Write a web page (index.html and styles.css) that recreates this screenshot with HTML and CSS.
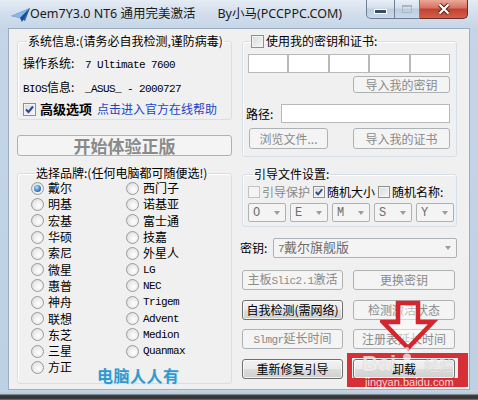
FILE: index.html
```html
<!DOCTYPE html>
<html lang="zh-CN">
<head>
  <meta charset="UTF-8">
  <title>Oem7Y3.0 NT6 通用完美激活</title>
  <link rel="stylesheet" href="styles.css">
</head>
<body>
<div class="window">
  <div class="titlebar">
    <svg class="app-icon" viewBox="0 0 19 14">
      <polygon points="0,8 19,0 14,13 9,10" fill="#2a66b8"/>
      <polygon points="0,8 19,0 9,10" fill="#86b6ea"/>
      <polygon points="9,10 19,0 11,14" fill="#1d4e94"/>
    </svg>
    <div class="title">Oem7Y3.0 NT6 通用完美激活<span class="by">By小马(PCCPPC.COM)</span></div>
    <div class="caption">
      <div class="cap cap-min"><span class="glyph-min"></span></div>
      <div class="cap cap-max"><span class="glyph-max"></span></div>
      <div class="cap cap-close">
        <svg class="glyph-close" viewBox="0 0 16 12">
          <path d="M3.5 1.5 L12.5 10.5 M12.5 1.5 L3.5 10.5" stroke="#5b1e17" stroke-width="4.2" fill="none"/>
          <path d="M3.5 1.5 L12.5 10.5 M12.5 1.5 L3.5 10.5" stroke="#fff" stroke-width="2.2" fill="none"/>
        </svg>
      </div>
    </div>
  </div>

  <div class="client">
    <!-- 左侧 -->
    <div class="col">
      <fieldset class="group sys">
        <legend>系统信息:(请务必自我检测,谨防病毒)</legend>
        <div class="info-row"><span class="k">操作系统:</span><span class="mono">7 Ultimate 7600</span></div>
        <div class="info-row"><span class="k"><span class="mono">BIOS</span>信息:</span><span class="mono">_ASUS_ - 2000727</span></div>
        <div class="check-row">
          <span class="cb"><svg viewBox="0 0 11 11"><path d="M2 5.5 L4.5 8 L9 2.5" fill="none" stroke="#2c4785" stroke-width="2"/></svg></span>
          <b>高级选项</b>
          <a class="link" href="#">点击进入官方在线帮助</a>
        </div>
      </fieldset>

      <button class="btn big" disabled>开始体验正版</button>

      <fieldset class="group brands">
        <legend>选择品牌:(任何电脑都可随便选!)</legend>
        <div class="radio-grid">
          <label class="radio"><span class="rd on"></span>戴尔</label>
          <label class="radio"><span class="rd"></span>明基</label>
          <label class="radio"><span class="rd"></span>宏基</label>
          <label class="radio"><span class="rd"></span>华硕</label>
          <label class="radio"><span class="rd"></span>索尼</label>
          <label class="radio"><span class="rd"></span>微星</label>
          <label class="radio"><span class="rd"></span>惠普</label>
          <label class="radio"><span class="rd"></span>神舟</label>
          <label class="radio"><span class="rd"></span>联想</label>
          <label class="radio"><span class="rd"></span>东芝</label>
          <label class="radio"><span class="rd"></span>三星</label>
          <label class="radio"><span class="rd"></span>方正</label>
          <label class="radio"><span class="rd"></span>西门子</label>
          <label class="radio"><span class="rd"></span>诺基亚</label>
          <label class="radio"><span class="rd"></span>富士通</label>
          <label class="radio"><span class="rd"></span>技嘉</label>
          <label class="radio"><span class="rd"></span>外星人</label>
          <label class="radio"><span class="rd"></span><span class="mono">LG</span></label>
          <label class="radio"><span class="rd"></span><span class="mono">NEC</span></label>
          <label class="radio"><span class="rd"></span><span class="mono">Trigem</span></label>
          <label class="radio"><span class="rd"></span><span class="mono">Advent</span></label>
          <label class="radio"><span class="rd"></span><span class="mono">Medion</span></label>
          <label class="radio"><span class="rd"></span><span class="mono">Quanmax</span></label>
        </div>
      </fieldset>
    </div>

    <!-- 右侧 -->
    <div class="col">
      <fieldset class="group keys">
        <legend><span class="cb"></span>使用我的密钥和证书:</legend>
        <div class="key-grid">
          <span class="box"></span><span class="box"></span><span class="box"></span><span class="box"></span><span class="box"></span>
        </div>
        <button class="btn import-key" disabled>导入我的密钥</button>
        <div class="path-row">
          <span class="path-label">路径:</span>
          <span class="box path-input"></span>
        </div>
        <div class="file-row">
          <button class="btn browse" disabled>浏览文件...</button>
          <button class="btn import-cert" disabled>导入我的证书</button>
        </div>
      </fieldset>

      <fieldset class="group boot">
        <legend>引导文件设置:</legend>
        <div class="boot-checks">
          <span class="chk off"><span class="cb"></span>引导保护</span>
          <span class="chk"><span class="cb"><svg viewBox="0 0 11 11"><path d="M2 5.5 L4.5 8 L9 2.5" fill="none" stroke="#2c4785" stroke-width="2"/></svg></span>随机大小</span>
          <span class="chk"><span class="cb"></span>随机名称:</span>
        </div>
        <div class="combo-row">
          <span class="combo mono">O</span>
          <span class="combo mono">E</span>
          <span class="combo mono">M</span>
          <span class="combo mono">S</span>
          <span class="combo mono">Y</span>
        </div>
      </fieldset>

      <div class="key-row">
        <span class="key-label">密钥:</span>
        <span class="combo wide"><span><span class="mono">7</span>戴尔旗舰版</span></span>
      </div>

      <div class="actions">
        <button class="btn" disabled>主板<span class="mono">Slic2.1</span>激活</button>
        <button class="btn" disabled>更换密钥</button>
        <button class="btn">自我检测(需网络)</button>
        <button class="btn" disabled>检测激活状态</button>
        <button class="btn" disabled><span class="mono">Slmgr</span>延长时间</button>
        <button class="btn" disabled>注册表延长时间</button>
        <button class="btn">重新修复引导</button>
        <button class="btn">卸载</button>
      </div>
    </div>
  </div>
  <div class="frame-bottom"></div>

  <!-- 图片上的标注和水印 -->
  <div class="wm-cn">电脑人人有</div>
  <div class="red-box"></div>
  <svg class="red-arrow" viewBox="0 0 58 52">
    <polygon points="18,3 38,3 38,22 53,22 28,48 3,22 18,22" fill="rgba(255,255,255,0.45)" stroke="#d3262d" stroke-width="4.5" stroke-linejoin="miter"/>
  </svg>
  <svg class="bd-paw" viewBox="0 0 14 14">
    <circle cx="3" cy="4" r="2" fill="#fff"/>
    <circle cx="7" cy="2" r="2" fill="#fff"/>
    <circle cx="11" cy="4" r="2" fill="#fff"/>
    <ellipse cx="7" cy="10" rx="4" ry="3.5" fill="#fff"/>
  </svg>
  <div class="bd-bai">Bai</div>
  <div class="bd-jy">经验</div>
  <div class="bd-url">jingyan.baidu.com</div>
</div>
</body>
</html>
```

FILE: styles.css
```css
* { box-sizing: border-box; }
body {
  margin: 0;
  font-family: "Noto Sans CJK SC", "Noto Sans", sans-serif;
  font-size: 12px;
  line-height: 16px;
  color: #000;
  background: #fff;
}
.mono { font-family: "Liberation Mono", "Noto Sans CJK SC", monospace; font-size: 11px; letter-spacing: -0.6px; }

/* 窗口外框 */
.window {
  position: relative;
  width: 478px;
  height: 400px;
  overflow: hidden;
  background: linear-gradient(180deg, #e4ecf4 0, #d2deeb 14px, #c4d5e7 30px, #bdd0e4 100%);
}
.titlebar { display: flex; height: 28px; }
.app-icon { width: 19px; height: 14px; margin: 8px 0 0 11px; flex: none; }
.title {
  padding-left: 0;
  line-height: 27px;
  font-family: "Noto Sans", "Noto Sans CJK SC", sans-serif;
  font-size: 12.5px;
  color: #1b1b1b;
  white-space: nowrap;
}
.title .by { margin-left: 22px; }
.caption { display: flex; margin-left: auto; margin-right: 10px; height: 19px; }
.cap {
  height: 19px;
  border: 1px solid #6f8096;
  border-top: none;
  display: flex;
  align-items: center;
  justify-content: center;
  background: linear-gradient(#e8eff7, #d3dfeb 45%, #bccddf 50%, #cbd9e8);
}
.cap-min { width: 29px; border-radius: 0 0 0 5px; }
.cap-max { width: 25px; border-left: none; }
.cap-close {
  width: 48px;
  border-left: none;
  border-color: #6b2a22;
  border-radius: 0 0 5px 0;
  background: linear-gradient(#eaa898, #d6705f 45%, #c3412f 50%, #d2604c);
}
.glyph-min { width: 13px; height: 5px; margin-top: 5px; background: #3b4b60; border: 1px solid #fff; }
.glyph-max { width: 10px; height: 8px; border: 1px solid #aab6c4; border-top-width: 2px; }
.glyph-close { width: 16px; height: 12px; }

/* 客户区 */
.client {
  display: flex;
  gap: 10px;
  height: 362px;
  margin: 0 8px;
  padding: 4px 12px 0 8px;
  background: #f0f0f0;
  border: 1px solid #9aadc1;
}
.col { width: 215px; flex: none; }

fieldset.group {
  display: block;
  margin: 0;
  padding: 0;
  min-width: 0;
  border: 1px solid #d5dfe5;
  border-radius: 3px;
  box-shadow: inset 1px 1px 0 #fff;
}
legend { padding: 0 1px; margin-left: 4px; line-height: 16px; white-space: nowrap; }

/* 复选框 / 单选框 */
.cb {
  display: inline-block;
  flex: none;
  width: 13px;
  height: 13px;
  border: 1px solid #8e8f8f;
  background: linear-gradient(135deg, #d8dadc, #f6f6f6);
  box-shadow: inset 0 0 0 1px #f4f4f4;
}
.cb svg { display: block; width: 100%; height: 100%; }
.rd {
  flex: none;
  width: 13px;
  height: 13px;
  border-radius: 50%;
  border: 1px solid #9a9a9a;
  background: radial-gradient(circle at 60% 60%, #fff 0, #eeeeee 45%, #d3d3d3 100%);
  display: flex;
  align-items: center;
  justify-content: center;
}
.rd.on::after {
  content: "";
  width: 7px;
  height: 7px;
  border-radius: 50%;
  background: radial-gradient(circle at 40% 35%, #bfe6fd 0, #4f8fd1 45%, #1d3f7a 100%);
}

/* 按钮 */
.btn {
  display: block;
  font: inherit;
  height: 20px;
  padding: 0;
  border: 1px solid #707070;
  border-radius: 3px;
  background: linear-gradient(#f2f2f2 0, #ebebeb 50%, #dddddd 50%, #cfcfcf 100%);
  color: #000;
  line-height: 16px;
  box-shadow: inset 0 0 0 1px rgba(255,255,255,0.7);
  white-space: nowrap;
}
.btn:disabled { border-color: #adb2b5; background: #f4f4f4; color: #8a8a8a; box-shadow: none; }
.btn.big { margin-top: 15px; height: 21px; width: 100%; font-size: 17px; font-weight: bold; line-height: 19px; }

.box { display: block; height: 19px; border: 1px solid #b9b9b9; background: #fff; }

/* 系统信息 */
fieldset.sys { padding: 2px 0 0 5px; }
.info-row { height: 24px; line-height: 24px; white-space: nowrap; }
.info-row .k { display: inline-block; width: 62px; }
.check-row { height: 20px; display: flex; align-items: center; gap: 4px; white-space: nowrap; }
.check-row b { font-size: 13px; }
.link { color: #1a44c8; text-decoration: none; margin-left: 1px; }

/* 品牌 */
fieldset.brands { margin-top: 10px; padding: 0 0 7px 13px; }
.brands legend { line-height: 14px; }
.radio-grid {
  display: grid;
  grid-template-columns: 95px 1fr;
  grid-template-rows: repeat(12, 16.3px);
  grid-auto-flow: column;
}
.radio { display: flex; align-items: center; gap: 4px; white-space: nowrap; }

/* 密钥和证书 */
fieldset.keys { padding: 0 6px 7px 5px; }
.keys legend { display: flex; align-items: center; gap: 2px; margin-left: 2px; }
.key-grid { display: grid; grid-template-columns: repeat(5, 1fr); margin-top: 5px; }
.import-key { width: 97px; height: 17px; margin: 3px 0 0 auto; line-height: 14px; }
.path-row { display: flex; align-items: center; margin: 11px 0 0 -2px; height: 19px; }
.path-label { width: 35px; }
.path-input { flex: 1; }
.file-row { display: flex; justify-content: space-between; margin-top: 5px; }
.file-row .btn { height: 21px; }
.browse { width: 79px; margin-left: 1px; }
.import-cert { width: 97px; }

/* 引导文件设置 */
fieldset.boot { margin-top: 10px; padding: 0 2px 4px 5px; }
.boot legend { line-height: 14px; margin-left: 5px; }
.boot-checks { display: flex; gap: 3px; margin-top: 3px; height: 16px; align-items: center; white-space: nowrap; }
.chk { display: flex; align-items: center; gap: 2px; }
.chk .cb { width: 12px; height: 12px; }
.chk.off { color: #8a8a8a; }
.chk.off .cb { border-color: #c2c2c2; background: #f4f4f4; }
.combo-row { display: flex; gap: 4px; margin-top: 3px; }
.combo {
  display: flex;
  align-items: center;
  justify-content: space-between;
  width: 38px;
  height: 19px;
  padding: 0 5px 0 4px;
  border: 1px solid #adb2b5;
  border-radius: 2px;
  background: #f4f4f4;
  color: #6d6d6d;
}
.combo::after {
  content: "";
  border-left: 3.5px solid transparent;
  border-right: 3.5px solid transparent;
  border-top: 4px solid #9c9c9c;
}
.combo.mono { font-size: 12px; letter-spacing: 0; }

.key-row { display: flex; align-items: center; margin: 11px 0 0 -2px; }
.key-label { width: 33px; }
.combo.wide { flex: 1; width: auto; height: 20px; font-size: 13px; }

.actions {
  display: grid;
  grid-template-columns: 101px 102px;
  column-gap: 10px;
  row-gap: 9.5px;
  margin-top: 12px;
}

.frame-bottom {
  height: 10px;
  background: linear-gradient(#c6d6e6 0, #b7cadd 4px, #444 5px, #2e2e2e 8px, #777 10px);
}

/* 标注与水印 */
.wm-cn {
  position: absolute;
  left: 97px;
  top: 366px;
  font-size: 16px;
  font-weight: bold;
  line-height: 18px;
  letter-spacing: 0.5px;
  color: #3399cc;
  text-shadow: 1px 1px 0 #cde8f4;
}
.red-box {
  position: absolute;
  left: 347px;
  top: 353px;
  width: 121px;
  height: 34px;
  border: solid rgba(212, 36, 44, 0.95);
  border-width: 5px 10px 9px 5px;
}
.red-arrow { position: absolute; left: 380px; top: 300px; width: 58px; height: 52px; }
.bd-paw { position: absolute; left: 400px; top: 347px; width: 14px; height: 14px; opacity: 0.7; }
.bd-bai {
  position: absolute;
  left: 362px;
  top: 352px;
  font-family: "Liberation Sans", sans-serif;
  font-size: 22px;
  font-weight: bold;
  line-height: 24px;
  color: rgba(255,255,255,0.75);
  text-shadow: 0 0 1px rgba(0,0,0,0.25);
}
.bd-jy {
  position: absolute;
  left: 424px;
  top: 356px;
  font-size: 15px;
  line-height: 18px;
  color: rgba(255,255,255,0.7);
  text-shadow: 0 0 1px rgba(0,0,0,0.25);
}
.bd-url {
  position: absolute;
  left: 365px;
  top: 376px;
  font-family: "Liberation Sans", sans-serif;
  font-size: 11px;
  line-height: 12px;
  color: rgba(255,255,255,0.8);
}
```
